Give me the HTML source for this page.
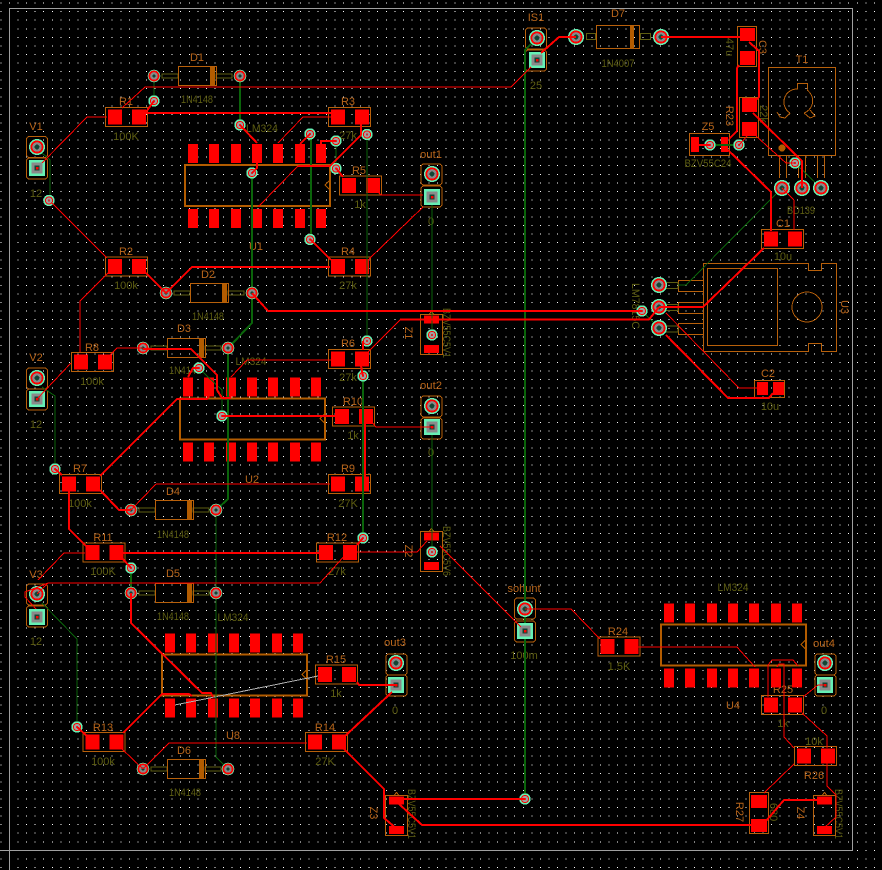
<!DOCTYPE html>
<html><head><meta charset="utf-8"><title>PCB</title>
<style>
html,body{margin:0;padding:0;background:#000;width:882px;height:870px;overflow:hidden}
svg{display:block}
text{font-family:"Liberation Sans",sans-serif;font-size:11px;text-anchor:middle}
.o{fill:#b8651a}
.y{fill:#5e5e12}
</style></head><body>
<svg width="882" height="870" viewBox="0 0 882 870" xmlns="http://www.w3.org/2000/svg" shape-rendering="crispEdges">
<defs>
<g id="r"><rect x=".5" y=".5" width="42" height="19" fill="none" stroke="#b8600a"/><rect x="3" y="2.5" width="14" height="15" fill="#f00"/><rect x="27" y="2.5" width="14" height="15" fill="#f00"/></g>
<g id="u"><rect width="145" height="41" fill="none" stroke="#b35c00" stroke-width="2"/><path d="M145 15l-5 5 5 5" fill="none" stroke="#b35c00"/>
<path fill="#f00" d="M3-21h10v19H3zM24-21h10v19H24zM46-21h10v19H46zM67-21h10v19H67zM88-21h10v19H88zM110-21h10v19h-10zM131-21h10v19h-10zM3 44h10v19H3zM24 44h10v19H24zM46 44h10v19H46zM67 44h10v19H67zM88 44h10v19H88zM110 44h10v19h-10zM131 44h10v19h-10z"/></g>
<g id="d"><rect x="8" y="-2" width="16" height="4" fill="none" stroke="#5e5e12"/><rect x="62" y="-2" width="16" height="4" fill="none" stroke="#5e5e12"/><rect x="24.500" y="-9.500" width="38" height="19" fill="none" stroke="#b8600a"/><rect x="56" y="-9" width="5" height="18" fill="#b35c00"/></g>
<g id="c"><rect x="-10.500" y="-10.500" width="21" height="21" rx="3" fill="none" stroke="#b8600a"/></g>
<g id="v"><circle r="5.700" fill="#66f0b4"/><circle r="3.600" fill="#a0a0a0" stroke="#f00"/><circle r="1.200" fill="#c33"/></g>
<g id="p"><circle r="6.300" fill="#66f0b4"/><circle r="5.500" fill="#f00"/><circle r="3.800" fill="#8a8a8a"/><circle r="1.500" fill="#143"/></g>
<g id="b"><circle r="8" fill="#66f0b4"/><circle r="6.500" fill="#f00"/><circle r="4.800" fill="#888"/><circle r="2.400" fill="#143"/></g>
<g id="q"><rect x="-8" y="-8" width="16" height="16" fill="#66f0b4"/><rect x="-5.500" y="-5.500" width="11" height="11" fill="#8a8a8a"/><rect x="-2.500" y="-2.500" width="5" height="5" fill="#143"/><rect x="-1" y="-1" width="2.500" height="2.500" fill="#f00"/></g>
<g id="z"><rect x=".5" y=".5" width="22" height="40" fill="none" stroke="#b8600a"/><path d="M9 .5l2.500-3 2.500 3" fill="none" stroke="#b8600a"/><rect x="4" y="1.500" width="15" height="8" fill="#f00"/><rect x="4" y="31" width="15" height="8" fill="#f00"/></g>
<path id="t" fill="none" stroke="#fff" stroke-width="1" stroke-dasharray="1 7.564" d="M.4 3.1h881m-881 8.558h881m-881 8.558h881m-881 8.558h881m-881 8.558h881m-881 8.558h881m-881 8.558h881m-881 8.558h881m-881 8.558h881m-881 8.558h881"/>
</defs>
<rect width="882" height="870" fill="#000"/>
<!-- grid -->
<use href="#t"/><use href="#t" y="85.58"/><use href="#t" y="171.16"/><use href="#t" y="256.74"/><use href="#t" y="342.32"/><use href="#t" y="427.9"/><use href="#t" y="513.48"/><use href="#t" y="599.06"/><use href="#t" y="684.64"/><use href="#t" y="770.22"/>
<path fill="none" stroke="#fff" stroke-width="1" stroke-dasharray="1 7.564" d="M.4 858.9h881m-881 8.558h881"/>
<!-- border -->
<path fill="none" stroke="#a0a0a0" d="M9.500 870V8.500H852.500V850.500H0"/>

<!-- labels -->
<text class="o" x="197" y="61">D1</text><text class="y" x="197" y="103" textLength="32" lengthAdjust="spacingAndGlyphs">1N4148</text>
<text class="o" x="126" y="105">R1</text><text class="y" x="126" y="140">100K</text>
<text class="o" x="348" y="105">R3</text><text class="y" x="348" y="139">27k</text>
<text class="o" x="126" y="255">R2</text><text class="y" x="126" y="289">100k</text>
<text class="o" x="348" y="255">R4</text><text class="y" x="348" y="289">27k</text>
<text class="o" x="359" y="174">R5</text><text class="y" x="360" y="208">1k</text>
<text class="y" x="262" y="132" textLength="32" lengthAdjust="spacingAndGlyphs">LM324</text><text class="o" x="256" y="250">U1</text>
<text class="o" x="36" y="130">V1</text><text class="y" x="36" y="197">12</text>
<text class="o" x="431" y="158" textLength="22" lengthAdjust="spacingAndGlyphs">out1</text><text class="y" x="431" y="225">0</text>
<text class="o" x="208" y="278">D2</text><text class="y" x="208" y="320" textLength="32" lengthAdjust="spacingAndGlyphs">1N4148</text>
<text class="o" x="92" y="351">R8</text><text class="y" x="92" y="385">100k</text>
<text class="o" x="184" y="332">D3</text><text class="y" x="185" y="374" textLength="32" lengthAdjust="spacingAndGlyphs">1N4148</text>
<text class="o" x="36" y="361">V2</text><text class="y" x="36" y="428">12</text>
<text class="y" x="251" y="365" textLength="31" lengthAdjust="spacingAndGlyphs">LM324</text><text class="o" x="252" y="483">U2</text>
<text class="o" x="353" y="405">R10</text><text class="y" x="353" y="439">1k</text>
<text class="o" x="348" y="347">R6</text><text class="y" x="348" y="381">27k</text>
<text class="o" x="431" y="389" textLength="22" lengthAdjust="spacingAndGlyphs">out2</text><text class="y" x="431" y="456">0</text>
<text class="o" x="80" y="472">R7</text><text class="y" x="80" y="507">100k</text>
<text class="o" x="173" y="495">D4</text><text class="y" x="173" y="538" textLength="32" lengthAdjust="spacingAndGlyphs">1N4148</text>
<text class="o" x="348" y="472">R9</text><text class="y" x="348" y="507">27K</text>
<text class="o" x="103" y="541">R11</text><text class="y" x="103" y="575">100K</text>
<text class="o" x="337" y="541">R12</text><text class="y" x="337" y="575">27k</text>
<text class="o" x="36" y="578">V3</text><text class="y" x="36" y="645">12</text>
<text class="o" x="173" y="577">D5</text><text class="y" x="173" y="620" textLength="32" lengthAdjust="spacingAndGlyphs">1N4148</text>
<text class="y" x="233" y="621" textLength="31" lengthAdjust="spacingAndGlyphs">LM324</text><text class="o" x="233" y="739">U8</text>
<text class="o" x="336" y="663">R15</text><text class="y" x="336" y="697">1k</text>
<text class="o" x="395" y="646" textLength="22" lengthAdjust="spacingAndGlyphs">out3</text><text class="y" x="395" y="714">0</text>
<text class="o" x="103" y="731">R13</text><text class="y" x="103" y="765">100k</text>
<text class="o" x="325" y="731">R14</text><text class="y" x="325" y="765">27K</text>
<text class="o" x="184" y="754">D6</text><text class="y" x="185" y="796" textLength="32" lengthAdjust="spacingAndGlyphs">1N4148</text>
<text class="o" x="524" y="592" textLength="33" lengthAdjust="spacingAndGlyphs">sohunt</text><text class="y" x="524" y="659">100m</text>
<text class="o" x="618" y="635">R24</text><text class="y" x="619" y="670">1.5K</text>
<text class="y" x="733" y="591" textLength="31" lengthAdjust="spacingAndGlyphs">LM324</text><text class="o" x="733" y="709">U4</text>
<text class="o" x="783" y="693">R25</text><text class="y" x="783" y="727">1k</text>
<text class="o" x="824" y="647" textLength="22" lengthAdjust="spacingAndGlyphs">out4</text><text class="y" x="824" y="714">0</text>
<text class="y" x="814" y="745">10k</text><text class="o" x="814" y="779">R26</text>
<text class="o" x="768" y="377">C2</text><text class="y" x="770" y="410">10u</text>
<text class="o" x="783" y="227">C1</text><text class="y" x="783" y="260">10u</text>
<text class="o" x="802" y="63">T1</text><text class="y" x="801" y="214" textLength="28" lengthAdjust="spacingAndGlyphs">BD139</text>
<text class="o" x="708" y="130">Z5</text><text class="y" x="708" y="167" textLength="47" lengthAdjust="spacingAndGlyphs">BZV55C24</text>
<text class="o" x="618" y="17">D7</text><text class="y" x="618" y="67" textLength="33" lengthAdjust="spacingAndGlyphs">1N4007</text>
<text class="o" x="536" y="21">IS1</text><text class="y" x="536" y="89">25</text>
<text class="o" transform="translate(763 47) rotate(90)" y="4">C3</text><text class="y" transform="translate(730 47) rotate(90)" y="4">47u</text>
<text class="o" transform="translate(730 116) rotate(90)" y="4">R23</text><text class="y" transform="translate(764 114) rotate(90)" y="4">22k</text>
<text class="o" transform="translate(845 307) rotate(90)" y="4">U3</text>
<text class="y" transform="translate(636 306) rotate(90)" y="4" textLength="46" lengthAdjust="spacingAndGlyphs">LM7815C</text>
<text class="o" transform="translate(409 333) rotate(90)" y="4">Z1</text><text class="y" transform="translate(447 333) rotate(90)" y="4" textLength="50" lengthAdjust="spacingAndGlyphs">BZV55C5V1</text>
<text class="o" transform="translate(409 551) rotate(90)" y="4">Z2</text><text class="y" transform="translate(447 551) rotate(90)" y="4" textLength="50" lengthAdjust="spacingAndGlyphs">BZV55C5V6</text>
<text class="o" transform="translate(374 813) rotate(90)" y="4">Z3</text><text class="y" transform="translate(412 814) rotate(90)" y="4" textLength="50" lengthAdjust="spacingAndGlyphs">BZV55C5V1</text>
<text class="o" transform="translate(801 813) rotate(90)" y="4">Z4</text><text class="y" transform="translate(839 814) rotate(90)" y="4" textLength="50" lengthAdjust="spacingAndGlyphs">BZV55C5V1</text>
<text class="o" transform="translate(740 812) rotate(90)" y="4">R27</text><text class="y" transform="translate(774 812) rotate(90)" y="4">680</text>

<!-- silkscreen -->
<use href="#d" x="154" y="76"/><use href="#d" x="166" y="293"/><use href="#d" x="143" y="348"/><use href="#d" x="131" y="510"/><use href="#d" x="131" y="593"/><use href="#d" x="143" y="769"/>
<!-- D7 -->
<g fill="none"><rect x="586.500" y="33.500" width="9" height="6" stroke="#5e5e12"/><rect x="640.500" y="33.500" width="10" height="6" stroke="#5e5e12"/><rect x="596.500" y="25.500" width="43" height="23" stroke="#b8600a"/></g><rect x="630" y="26" width="4" height="22" fill="#b35c00"/>
<!-- connectors -->
<use href="#c" x="37" y="147"/><use href="#c" x="37" y="168.500"/><use href="#c" x="37" y="378.500"/><use href="#c" x="37" y="399.500"/><use href="#c" x="37" y="594.500"/><use href="#c" x="37" y="616.500"/>
<use href="#c" x="431.500" y="174.500"/><use href="#c" x="431.500" y="196.500"/><use href="#c" x="431.500" y="406.500"/><use href="#c" x="431.500" y="428.500"/><use href="#c" x="396.500" y="664.500"/><use href="#c" x="396.500" y="685.500"/><use href="#c" x="825.500" y="664.500"/><use href="#c" x="825.500" y="685.500"/><use href="#c" x="536" y="38.500"/><use href="#c" x="536" y="60.500"/><use href="#c" x="525" y="608.500"/><use href="#c" x="525" y="631.500"/>
<!-- regulator, transistor -->
<g fill="none" stroke="#b8600a">
<path d="M703.500 263.500H808.500V270.500H821.500V263.500H836.500V351.500H821.500V343.500H808.500V351.500H703.500Z"/>
<rect x="707.500" y="268.500" width="70" height="77"/>
<circle cx="807" cy="307" r="15"/>
<path d="M703 280.500H678.500V291.500H703M703 302.500H678.500V313.500H703M703 323.500H678.500V334.500H703"/>
<rect x="768.500" y="67.500" width="67" height="88"/>
<path d="M797.500 89.500V83.500H807.500V89.500M810 110L815 116 810 118 804 113M790 113L785 118 780 117 777 112M797 89A13 13 0 0 0 790 113M804 113A13 13 0 0 0 807 90"/>
<path d="M779.500 156V178M786.500 156V178M798.500 156V178M805.500 156V178M817.500 156V178M824.500 156V178"/>
<rect x="737.500" y="26.500" width="19" height="40"/>
<rect x="739.500" y="97.500" width="19" height="40"/>
<rect x="689.500" y="133.500" width="40" height="22"/>
<rect x="754.500" y="380.500" width="30" height="17"/>
<rect x="749.500" y="792.500" width="19" height="41"/>
</g>
<circle cx="782" cy="148" r="3.500" fill="#b35c00"/>
<g fill="none" stroke="#5e5e12"><path d="M665 282.500H678V288.500H665M665 304.500H678V310.500H665M665 326H678V332H665"/></g>
<!-- SMD parts -->
<use href="#r" x="105" y="107"/><use href="#r" x="328" y="107"/><use href="#r" x="105" y="256.500"/><use href="#r" x="328" y="256.500"/><use href="#r" x="339" y="175.500"/><use href="#r" x="71" y="352"/><use href="#r" x="328" y="349"/><use href="#r" x="332" y="406.500"/><use href="#r" x="59" y="474"/><use href="#r" x="328" y="474"/><use href="#r" x="82.500" y="542.500"/><use href="#r" x="316" y="542.500"/><use href="#r" x="315" y="664.500"/><use href="#r" x="82.500" y="732"/><use href="#r" x="305" y="732"/><use href="#r" x="597.500" y="636.500"/><use href="#r" x="761" y="695"/><use href="#r" x="794" y="746"/><use href="#r" x="761" y="229"/>
<use href="#u" x="185" y="165"/><use href="#u" x="180" y="398.500"/><use href="#u" x="162" y="654.500"/><use href="#u" x="661" y="624.500"/>
<use href="#z" x="420" y="314"/><use href="#z" x="420" y="531"/><use href="#z" x="385" y="795"/><use href="#z" x="813" y="795"/>
<g fill="#f00">
<rect x="740" y="28" width="15" height="13"/><rect x="740" y="51" width="15" height="14"/><rect x="742" y="98" width="15" height="14"/><rect x="742" y="122" width="15" height="14"/>
<rect x="691" y="137" width="8" height="15"/><rect x="721" y="137" width="7" height="15"/>
<rect x="757" y="382" width="11" height="13"/><rect x="773" y="382" width="11" height="13"/>
<rect x="751" y="795" width="16" height="13"/><rect x="751" y="819" width="16" height="13"/>
</g>
<!-- gray airwire -->
<path d="M175 705L318 676" stroke="#b0b0b0" stroke-width="1" fill="none"/>

<!-- green traces -->
<g fill="none" stroke="#0a640a">
<path stroke-width="2" d="M240 76V125M252 173V323L228 348V499L216 510M311 134V240M363 376V538M537 38L525 50V799M131 568V593M699 145H739"/>
<path stroke-width="1" d="M154 76V101M336 141V168M367 134V341M432 197V335M432 427V552M216 510V757L228 769M222 416V390L207 376L199 368M42 387L55 396V469M42 153L50 160V200M42 603L77 639V727M782 188L686 285H678M795 163L821 188M642 311L659 328"/>
</g>
<!-- pads and vias -->
<use href="#p" x="154" y="76"/><use href="#p" x="240" y="76"/><use href="#p" x="166" y="293"/><use href="#p" x="252" y="293"/><use href="#p" x="143" y="348"/><use href="#p" x="228" y="348"/><use href="#p" x="131" y="510"/><use href="#p" x="216" y="510"/><use href="#p" x="131" y="593"/><use href="#p" x="216" y="593"/><use href="#p" x="143" y="769"/><use href="#p" x="228" y="769"/>
<use href="#v" x="154" y="101"/><use href="#v" x="240" y="125"/><use href="#v" x="49" y="200.500"/><use href="#v" x="252" y="173"/><use href="#v" x="310" y="134"/><use href="#v" x="336" y="141"/><use href="#v" x="336" y="168.500"/><use href="#v" x="367" y="134.500"/><use href="#v" x="310" y="239.500"/><use href="#v" x="199" y="368"/><use href="#v" x="222" y="416"/><use href="#v" x="367" y="341"/><use href="#v" x="363" y="376"/><use href="#v" x="55" y="469"/><use href="#v" x="131" y="568"/><use href="#v" x="363" y="538"/><use href="#v" x="432" y="335"/><use href="#v" x="432" y="552"/><use href="#v" x="77" y="727"/><use href="#v" x="525" y="799"/><use href="#v" x="642" y="311"/><use href="#v" x="710" y="145"/><use href="#v" x="739" y="145"/><use href="#v" x="795" y="163"/>
<use href="#b" x="37" y="147"/><use href="#q" x="37" y="168"/><use href="#b" x="37" y="378"/><use href="#q" x="37" y="399"/><use href="#b" x="37" y="594"/><use href="#q" x="37" y="617"/>
<use href="#b" x="432" y="174"/><use href="#q" x="432" y="197"/><use href="#b" x="432" y="406"/><use href="#q" x="432" y="427"/><use href="#b" x="396" y="663"/><use href="#q" x="396" y="685"/><use href="#b" x="825" y="663"/><use href="#q" x="825" y="685"/>
<use href="#b" x="537" y="38"/><use href="#q" x="537" y="60"/><use href="#b" x="525" y="609"/><use href="#q" x="525" y="631"/>
<use href="#b" x="576" y="37"/><use href="#b" x="661" y="37"/>
<use href="#b" x="659" y="285"/><use href="#b" x="659" y="307"/><use href="#b" x="659" y="328"/>
<use href="#b" x="782" y="188"/><use href="#b" x="802" y="188"/><use href="#b" x="821" y="188"/>

<!-- red traces -->
<g fill="none" stroke="#f00" stroke-linejoin="miter">
<path stroke-width="1" d="M42 163L87 117H107M122 108L145 87H511L531 67M52 203L107 258M331 117H303L278 143M298 166L258 207M381 195H423M378 192L381 195M423 207L369 259M80 352V301L108 273M37 399L71 363M143 348H117L107 358M331 360H247L231 377M368 352L400 320H432M372 422L376 427H432M307 743H169L143 769M122 749L143 769M156 484H330M156 484L131 510M38 580L64 553H85M347 553L320 583H48L25 592V597L36 609M37 594L48 583M357 552H417L427 541M440 546L521 627M525 609H571L600 639M637 647H737L755 667M768 697V665L772 660H793L798 666M777 667L779 664H784V737L794 748M802 713L827 736V748M803 697L818 685H825M794 764L764 793M827 763V786L836 795V817L824 828M666 313L739 388H757M794 200V230M782 188L794 200M748 135L739 145M756 136L786 163H795"/>
<path stroke-width="2" d="M154 101L146 112M146 113H331M240 125L257 143M257 163V168L252 173M361 124V135L330 166H298M310 134L300 144M336 141H321V144M336 168L343 177M310 239L331 260M146 273L166 293L192 267H330M252 293L268 311H642M400 319.500H649L659 307M143 349H191L217 375V390L222 398H230L231 396M100 476L177 399H207L209 396M100 490L119 510H131M55 469L62 475M69 490V529L86 546M122 553H319M122 558L131 568M357 545L363 538M222 416H335M199 368H193L188 377M365 423V477M361 366L363 376M363 341V350M344 749L384 789V818L397 829M344 737L392 692M123 733L162 694H189L192 696M131 593V623L202 693H211L213 697M77 727L88 737M357 682L359 685H396M396 799H525M398 803L422 825H760M541 53L559 37H576M661 37H740M749 42L759 51V97L756 100M739 65L737 68V131L729 139M753 113L802 161V188M728 150L771 192V231M659 307H703L764 248M666 335L728 398H769L773 393M766 821L784 800H818M699 145H710"/>
</g>
</svg>
</body></html>
